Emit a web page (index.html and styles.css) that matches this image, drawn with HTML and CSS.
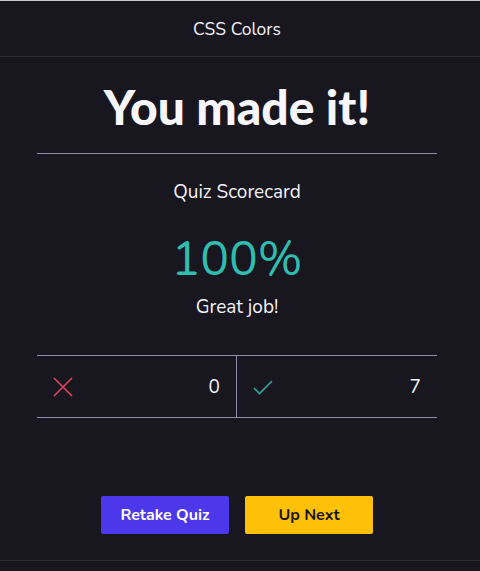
FILE: index.html
```html
<!DOCTYPE html>
<html>
<head>
<meta charset="utf-8">
<link rel="stylesheet" href="styles.css">
</head>
<body>
<div class="page">
  <header class="topbar"><span class="topbar-title">CSS Colors</span></header>
  <main class="result">
    <h1 class="title">You made it!</h1>
    <hr class="rule">
    <p class="label">Quiz Scorecard</p>
    <p class="score">100%</p>
    <p class="praise">Great job!</p>
    <div class="tally">
      <div class="cell">
        <svg class="icon" width="20" height="20" viewBox="0 0 20 20"><path d="M1 1L19 19M19 1L1 19" stroke="#e0435a" stroke-width="1.6" fill="none"/></svg>
        <span class="num">0</span>
      </div>
      <div class="cell">
        <svg class="icon" width="20" height="20" viewBox="0 0 20 20"><path d="M1 11L6.5 16.5L19 4" stroke="#2aa69b" stroke-width="1.6" fill="none"/></svg>
        <span class="num">7</span>
      </div>
    </div>
    <div class="actions">
      <button class="btn btn-retake">Retake Quiz</button>
      <button class="btn btn-next">Up Next</button>
    </div>
  </main>
  <div class="footer-line"></div>
</div>
</body>
</html>
```
FILE: styles.css
```css
html, body {
  margin: 0;
  padding: 0;
  background: #18161f;
}
body {
  font-family: "Nunito", Lato, "Open Sans", sans-serif;
  color: #f4f3f8;
  border-top: 1px solid #c9c8cf;
}
.page {
  height: 570px;
  display: flex;
  flex-direction: column;
}
.topbar {
  height: 55px;
  border-bottom: 1px solid #2e2c38;
  display: flex;
  align-items: center;
  justify-content: center;
  font-size: 17.5px;
  padding-right: 6px;
}
.result {
  width: 400px;
  margin: 0 auto;
  padding-right: 6px;
  display: flex;
  flex-direction: column;
  align-items: center;
  flex: 1;
}
.title {
  margin: 22px 0 0;
  font-family: Lato, sans-serif;
  font-weight: 900;
  font-size: 48px;
  line-height: 56px;
  letter-spacing: 0;
  color: #f7f6fb;
}
.rule {
  width: 400px;
  margin: 18px 0 0;
  border: 0;
  border-top: 1px solid #8e8aa9;
}
.label {
  margin: 17px 0 0;
  font-size: 19px;
  line-height: 42px;
}
.score {
  margin: 18px 0 0;
  font-size: 48px;
  line-height: 56px;
  color: #2ebdb0;
}
.praise {
  margin: 7px 0 0;
  font-size: 19px;
  line-height: 26px;
}
.tally {
  width: 400px;
  margin-top: 35px;
  border-top: 1px solid #8e8aa9;
  border-bottom: 1px solid #8e8aa9;
  display: grid;
  grid-template-columns: 1fr 1fr;
  height: 61px;
}
.cell {
  display: flex;
  align-items: center;
  justify-content: space-between;
  padding: 0 16px 0 16px;
}
.cell:first-child {
  border-right: 1px solid #8e8aa9;
}
.icon {
  display: block;
}
.num {
  font-size: 19px;
}
.actions {
  margin-top: 78px;
  display: flex;
  gap: 16px;
}
.btn {
  width: 128px;
  height: 38px;
  border: 0;
  border-radius: 2px;
  font-family: "Nunito", Lato, sans-serif;
  font-weight: 700;
  font-size: 16px;
  cursor: pointer;
}
.btn-retake {
  background: #4d37ea;
  color: #ffffff;
}
.btn-next {
  background: #ffc107;
  color: #17151c;
}
.footer-line {
  height: 1px;
  background: #2e2c38;
  margin-bottom: 10px;
}
```
